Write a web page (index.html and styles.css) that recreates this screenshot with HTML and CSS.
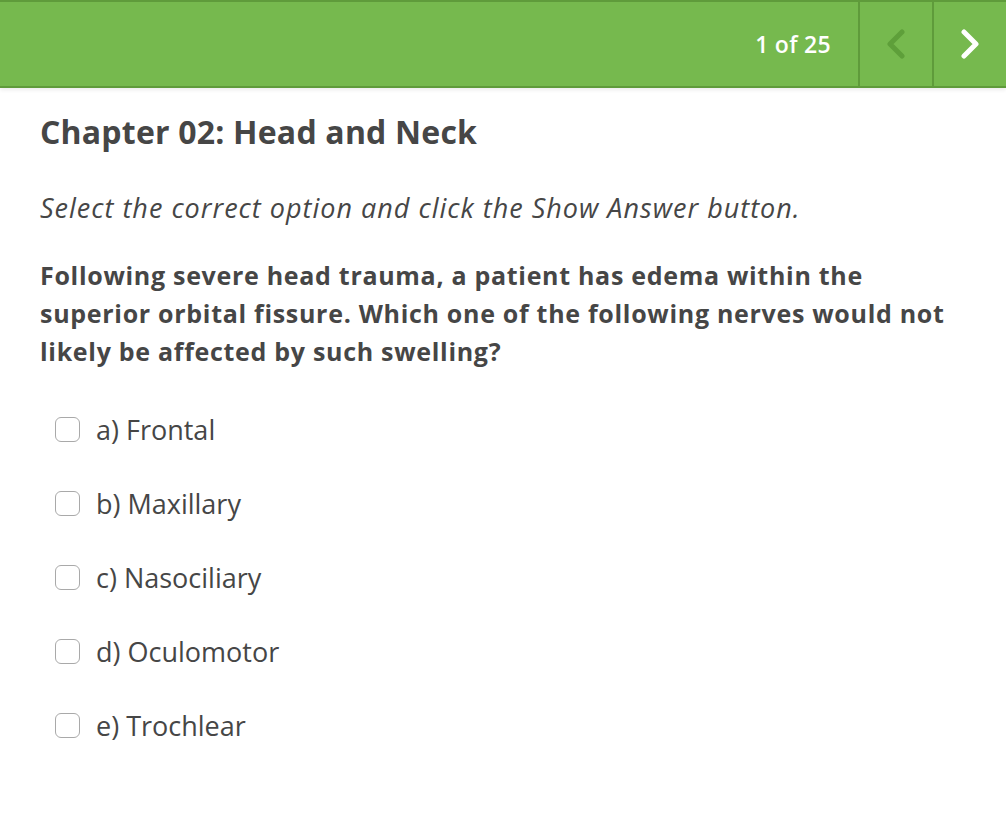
FILE: index.html
```html
<!DOCTYPE html>
<html lang="en">
<head>
    <meta charset="UTF-8">
    <title>Chapter 02: Head and Neck</title>
    <link rel="stylesheet" href="styles.css">
</head>
<body>
    <header class="topbar">
        <div class="counter">1 of 25</div>
        <button class="nav-btn nav-prev" disabled>
            <svg width="22" height="30" viewBox="0 0 22 30"><path d="M17 3 L5 15 L17 27" fill="none" stroke="currentColor" stroke-width="5" stroke-linecap="round" stroke-linejoin="round"/></svg>
        </button>
        <button class="nav-btn nav-next">
            <svg width="22" height="30" viewBox="0 0 22 30"><path d="M5 3 L17 15 L5 27" fill="none" stroke="currentColor" stroke-width="5" stroke-linecap="round" stroke-linejoin="round"/></svg>
        </button>
    </header>
    <main class="quiz">
        <h1 class="chapter">Chapter 02: Head and Neck</h1>
        <p class="instructions">Select the correct option and click the Show Answer button.</p>
        <p class="question">Following severe head trauma, a patient has edema within the superior orbital fissure. Which one of the following nerves would not likely be affected by such swelling?</p>
        <ul class="options">
            <li><label><input type="checkbox"><span class="box"></span>a) Frontal</label></li>
            <li><label><input type="checkbox"><span class="box"></span>b) Maxillary</label></li>
            <li><label><input type="checkbox"><span class="box"></span>c) Nasociliary</label></li>
            <li><label><input type="checkbox"><span class="box"></span>d) Oculomotor</label></li>
            <li><label><input type="checkbox"><span class="box"></span>e) Trochlear</label></li>
        </ul>
    </main>
</body>
</html>
```

FILE: styles.css
```css
*,
*::before,
*::after{
    box-sizing: border-box;
}
body {
    margin: 0;
    font-family: 'Open Sans', sans-serif;
    color: #464646;
    background: #ffffff;
}
.topbar {
    display: flex;
    justify-content: flex-end;
    height: 88px;
    background: #76b94e;
    border-top: 2px solid #5f9b3b;
    border-bottom: 2px solid #5f9b3b;
    box-shadow: 0 2px 4px rgba(0, 0, 0, 0.08);
}
.counter {
    display: flex;
    align-items: center;
    padding: 0 27px 0 0;
    color: #ffffff;
    font-size: 23px;
    font-weight: 600;
    letter-spacing: 0.3px;
}
.nav-btn {
    width: 74px;
    border: 0;
    border-left: 2px solid #5f9b3b;
    background: transparent;
    display: flex;
    align-items: center;
    justify-content: center;
    padding: 0;
}
.nav-prev {
    color: #5e9f3a;
}
.nav-next {
    color: #ffffff;
}
.quiz {
    padding: 22px 40px;
}
.chapter {
    margin: 0;
    font-size: 32px;
    font-weight: 700;
    line-height: 44px;
    letter-spacing: 0.2px;
}
.instructions {
    margin: 36px 0 0;
    font-size: 27px;
    font-style: italic;
    line-height: 36px;
    letter-spacing: 1px;
}
.question {
    max-width: 920px;
    margin: 30px 0 0;
    font-size: 25px;
    font-weight: 700;
    line-height: 38px;
    letter-spacing: 0.7px;
}
.options {
    list-style: none;
    margin: 22px 0 0;
    padding: 0 0 0 15px;
}
.options li {
    height: 74px;
    display: flex;
    align-items: center;
}
.options label {
    display: flex;
    align-items: center;
    gap: 16px;
    font-size: 27px;
}
.options input {
    display: none;
}
.box {
    width: 25px;
    height: 25px;
    border: 1px solid #a9a9a9;
    border-radius: 6px;
    background: #fff;
}
```
